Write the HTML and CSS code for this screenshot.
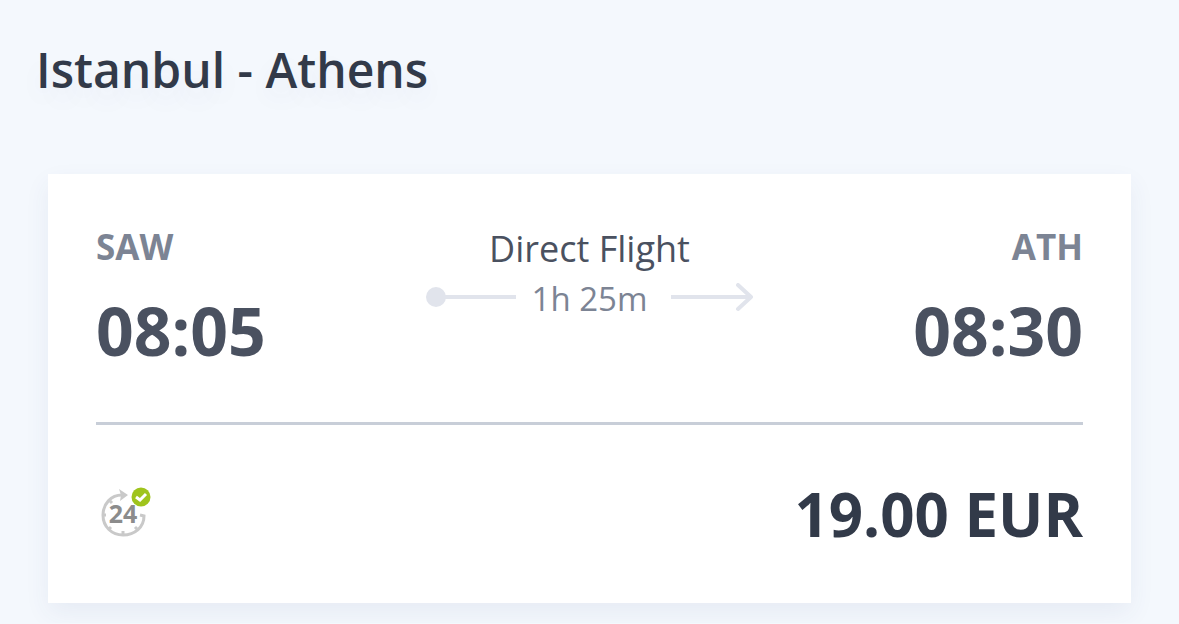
FILE: index.html
```html
<!DOCTYPE html>
<html lang="en">
<head>
  <meta charset="UTF-8" />
  <meta name="viewport" content="width=device-width, initial-scale=1.0" />
  <title>Istanbul - Athens</title>
  <link rel="stylesheet" href="styles.css">
</head>
<body>
  <h1 class="route-title">Istanbul - Athens</h1>

  <div class="card">
    <div class="flight">
      <div class="stop">
        <div class="airport">SAW</div>
        <div class="time">08:05</div>
      </div>

      <div class="middle">
        <div class="type">Direct Flight</div>
        <div class="duration">
          <svg class="line" width="92" height="32" viewBox="0 0 92 32" aria-hidden="true">
            <circle cx="10" cy="14" r="10" />
            <path d="M18 14H90" />
          </svg>
          <span>1h 25m</span>
          <svg class="line" width="92" height="32" viewBox="0 0 92 32" aria-hidden="true">
            <path d="M10 14H90" />
            <path class="head" d="M77 2L90 14L77 26" />
          </svg>
        </div>
      </div>

      <div class="stop stop-right">
        <div class="airport">ATH</div>
        <div class="time">08:30</div>
      </div>
    </div>

    <div class="bottom">
      <!-- 24h badge -->
      <svg class="badge" width="58" height="58" viewBox="0 0 58 58" role="img" aria-label="24">
        <g class="dial">
          <path d="M26 10C15 10 7 19 7 30C7 42 16 50 27 50C39 50 48 42 48 31L44 30" />
          <path d="M14 16L16 18M7 30H10M13 44L15 42M27 50V46M41 44L39 42" />
        </g>
        <path class="dial-arrow" d="M23 4L32 10L24 16L25 10Z" />
        <text class="badge-text" x="27" y="38">24</text>
        <circle class="badge-ok" cx="45" cy="12" r="9.5" />
        <path class="badge-check" d="M40 12L44 15L50 9" />
      </svg>
      <div class="price">19.00 EUR</div>
    </div>
  </div>
</body>
</html>
```
FILE: styles.css
```css
body {
  margin: 0;
  padding: 38px 48px 20px;
  font-family: 'Open Sans', sans-serif;
  background: #f4f8fd;
  color: #323a49;
}

.route-title {
  margin: 0 0 72px -12px;
  font-size: 48px;
  font-weight: 600;
  line-height: 64px;
  text-shadow: 0 12px 24px rgba(60, 70, 130, 0.06);
}

.card {
  padding: 0 48px;
  background: #fff;
  box-shadow: 0 10px 24px rgba(60, 75, 130, 0.07);
}

.flight {
  display: flex;
  justify-content: space-between;
  padding: 48px 0 52px;
  border-bottom: 3px solid #c8ced8;
}

.stop {
  flex: 1;
}

.stop-right {
  text-align: right;
}

.airport {
  font-size: 35px;
  font-weight: 700;
  line-height: 50px;
  color: #7c8494;
}

.time {
  margin-top: 18px;
  font-size: 66px;
  font-weight: 700;
  line-height: 80px;
  color: #4a5160;
}

.middle {
  text-align: center;
}

.type {
  font-size: 36px;
  line-height: 54px;
  color: #4a5160;
}

.duration {
  display: flex;
  align-items: center;
  justify-content: center;
  gap: 14px;
  font-size: 33px;
  line-height: 46px;
  color: #7c8494;
}

.line {
  fill: none;
  stroke: #e1e4ec;
  stroke-width: 4;
}

.line circle {
  fill: #e1e4ec;
  stroke: none;
}

.line .head {
  stroke-linecap: round;
  stroke-linejoin: round;
}

.bottom {
  display: flex;
  justify-content: space-between;
  align-items: center;
  padding: 48px 0;
}

.dial {
  fill: none;
  stroke: #c9c9c9;
  stroke-width: 3;
}

.dial-arrow {
  fill: #c9c9c9;
}

.badge-text {
  font-size: 25px;
  font-weight: 700;
  text-anchor: middle;
  fill: #8c8c8c;
}

.badge-ok {
  fill: #9fc41c;
}

.badge-check {
  fill: none;
  stroke: #fff;
  stroke-width: 3;
}

.price {
  font-size: 60px;
  font-weight: 700;
  line-height: 82px;
}
```
